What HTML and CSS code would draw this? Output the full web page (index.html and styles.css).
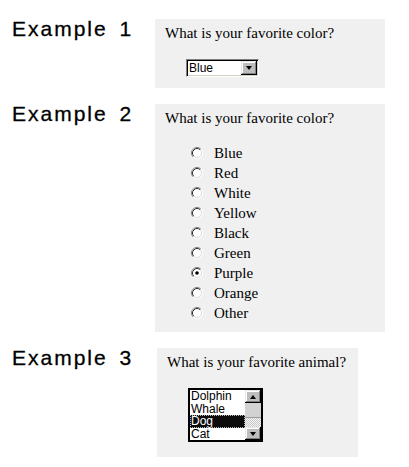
FILE: index.html
```html
<!DOCTYPE html>
<html>
<head>
<meta charset="utf-8">
<link rel="stylesheet" href="styles.css">
</head>
<body>
<div class="page">
  <div class="row">
    <div class="label">Example 1</div>
    <div class="panel panel-1">
      <div class="question">What is your favorite color?</div>
      <div class="select">
        <span class="select-value">Blue</span>
        <span class="btn btn-down"><span class="tri-down"></span></span>
      </div>
    </div>
  </div>
  <div class="row">
    <div class="label">Example 2</div>
    <div class="panel panel-2">
      <div class="question">What is your favorite color?</div>
      <ul class="radios">
        <li class="radio-row"><svg class="radio" viewBox="0 0 12 12"><circle cx="6" cy="6" r="4.5" fill="#fff"/><path d="M2.11 9.89A5.5 5.5 0 0 1 9.89 2.11" fill="none" stroke="#808080"/><path d="M9.89 2.11A5.5 5.5 0 0 1 2.11 9.89" fill="none" stroke="#fff"/><path d="M2.82 9.18A4.5 4.5 0 0 1 9.18 2.82" fill="none" stroke="#303030"/><path d="M9.18 2.82A4.5 4.5 0 0 1 2.82 9.18" fill="none" stroke="#dcdcdc"/></svg><span>Blue</span></li>
        <li class="radio-row"><svg class="radio" viewBox="0 0 12 12"><circle cx="6" cy="6" r="4.5" fill="#fff"/><path d="M2.11 9.89A5.5 5.5 0 0 1 9.89 2.11" fill="none" stroke="#808080"/><path d="M9.89 2.11A5.5 5.5 0 0 1 2.11 9.89" fill="none" stroke="#fff"/><path d="M2.82 9.18A4.5 4.5 0 0 1 9.18 2.82" fill="none" stroke="#303030"/><path d="M9.18 2.82A4.5 4.5 0 0 1 2.82 9.18" fill="none" stroke="#dcdcdc"/></svg><span>Red</span></li>
        <li class="radio-row"><svg class="radio" viewBox="0 0 12 12"><circle cx="6" cy="6" r="4.5" fill="#fff"/><path d="M2.11 9.89A5.5 5.5 0 0 1 9.89 2.11" fill="none" stroke="#808080"/><path d="M9.89 2.11A5.5 5.5 0 0 1 2.11 9.89" fill="none" stroke="#fff"/><path d="M2.82 9.18A4.5 4.5 0 0 1 9.18 2.82" fill="none" stroke="#303030"/><path d="M9.18 2.82A4.5 4.5 0 0 1 2.82 9.18" fill="none" stroke="#dcdcdc"/></svg><span>White</span></li>
        <li class="radio-row"><svg class="radio" viewBox="0 0 12 12"><circle cx="6" cy="6" r="4.5" fill="#fff"/><path d="M2.11 9.89A5.5 5.5 0 0 1 9.89 2.11" fill="none" stroke="#808080"/><path d="M9.89 2.11A5.5 5.5 0 0 1 2.11 9.89" fill="none" stroke="#fff"/><path d="M2.82 9.18A4.5 4.5 0 0 1 9.18 2.82" fill="none" stroke="#303030"/><path d="M9.18 2.82A4.5 4.5 0 0 1 2.82 9.18" fill="none" stroke="#dcdcdc"/></svg><span>Yellow</span></li>
        <li class="radio-row"><svg class="radio" viewBox="0 0 12 12"><circle cx="6" cy="6" r="4.5" fill="#fff"/><path d="M2.11 9.89A5.5 5.5 0 0 1 9.89 2.11" fill="none" stroke="#808080"/><path d="M9.89 2.11A5.5 5.5 0 0 1 2.11 9.89" fill="none" stroke="#fff"/><path d="M2.82 9.18A4.5 4.5 0 0 1 9.18 2.82" fill="none" stroke="#303030"/><path d="M9.18 2.82A4.5 4.5 0 0 1 2.82 9.18" fill="none" stroke="#dcdcdc"/></svg><span>Black</span></li>
        <li class="radio-row"><svg class="radio" viewBox="0 0 12 12"><circle cx="6" cy="6" r="4.5" fill="#fff"/><path d="M2.11 9.89A5.5 5.5 0 0 1 9.89 2.11" fill="none" stroke="#808080"/><path d="M9.89 2.11A5.5 5.5 0 0 1 2.11 9.89" fill="none" stroke="#fff"/><path d="M2.82 9.18A4.5 4.5 0 0 1 9.18 2.82" fill="none" stroke="#303030"/><path d="M9.18 2.82A4.5 4.5 0 0 1 2.82 9.18" fill="none" stroke="#dcdcdc"/></svg><span>Green</span></li>
        <li class="radio-row"><svg class="radio" viewBox="0 0 12 12"><circle cx="6" cy="6" r="4.5" fill="#fff"/><path d="M2.11 9.89A5.5 5.5 0 0 1 9.89 2.11" fill="none" stroke="#808080"/><path d="M9.89 2.11A5.5 5.5 0 0 1 2.11 9.89" fill="none" stroke="#fff"/><path d="M2.82 9.18A4.5 4.5 0 0 1 9.18 2.82" fill="none" stroke="#303030"/><path d="M9.18 2.82A4.5 4.5 0 0 1 2.82 9.18" fill="none" stroke="#dcdcdc"/><circle cx="6" cy="6" r="1.8" fill="#000"/></svg><span>Purple</span></li>
        <li class="radio-row"><svg class="radio" viewBox="0 0 12 12"><circle cx="6" cy="6" r="4.5" fill="#fff"/><path d="M2.11 9.89A5.5 5.5 0 0 1 9.89 2.11" fill="none" stroke="#808080"/><path d="M9.89 2.11A5.5 5.5 0 0 1 2.11 9.89" fill="none" stroke="#fff"/><path d="M2.82 9.18A4.5 4.5 0 0 1 9.18 2.82" fill="none" stroke="#303030"/><path d="M9.18 2.82A4.5 4.5 0 0 1 2.82 9.18" fill="none" stroke="#dcdcdc"/></svg><span>Orange</span></li>
        <li class="radio-row"><svg class="radio" viewBox="0 0 12 12"><circle cx="6" cy="6" r="4.5" fill="#fff"/><path d="M2.11 9.89A5.5 5.5 0 0 1 9.89 2.11" fill="none" stroke="#808080"/><path d="M9.89 2.11A5.5 5.5 0 0 1 2.11 9.89" fill="none" stroke="#fff"/><path d="M2.82 9.18A4.5 4.5 0 0 1 9.18 2.82" fill="none" stroke="#303030"/><path d="M9.18 2.82A4.5 4.5 0 0 1 2.82 9.18" fill="none" stroke="#dcdcdc"/></svg><span>Other</span></li>
      </ul>
    </div>
  </div>
  <div class="row">
    <div class="label">Example 3</div>
    <div class="panel panel-3">
      <div class="question">What is your favorite animal?</div>
      <div class="listbox">
        <ul class="items">
          <li class="item">Dolphin</li>
          <li class="item">Whale</li>
          <li class="item item-selected">Dog</li>
          <li class="item">Cat</li>
        </ul>
        <div class="scrollbar">
          <span class="btn btn-sb"><span class="tri-up"></span></span>
          <span class="thumb"></span>
          <span class="track"></span>
          <span class="btn btn-sb"><span class="tri-down"></span></span>
        </div>
      </div>
    </div>
  </div>
</div>
</body>
</html>
```
FILE: styles.css
```css
* { box-sizing: border-box; }
html, body { margin: 0; padding: 0; background: #fff; }
.page {
  padding: 19px 0 0 12px;
  display: flex;
  flex-direction: column;
  gap: 16px;
}
.row { display: flex; align-items: flex-start; }
.label {
  width: 143px;
  font-family: "Liberation Sans", Arial, sans-serif;
  font-size: 21px;
  line-height: 20px;
  letter-spacing: 2px;
  word-spacing: 4px;
  color: #000;
  white-space: nowrap;
  -webkit-text-stroke: 0.3px #000;
}
.panel {
  background: #f0f0f0;
  padding: 6px 10px 0 10px;
}
.panel-1 { width: 230px; height: 69px; padding-left: 10px; }
.panel-2 { width: 230px; height: 228px; }
.panel-3 { width: 201px; height: 109px; margin-left: 2px; padding-left: 10px; }
.question {
  font-family: "Liberation Serif", "Times New Roman", serif;
  font-size: 15px;
  line-height: 17px;
  color: #000;
  white-space: nowrap;
}
.select {
  margin: 17px 0 0 21px;
  width: 73px;
  height: 18px;
  background: #fff;
  border-style: solid;
  border-width: 1px;
  border-color: #808080 #fff #fff #808080;
  box-shadow: inset 1px 1px 0 #000, inset -1px -1px 0 #d4d0c8;
  display: flex;
  align-items: center;
  justify-content: space-between;
  padding: 1px 1px 1px 2px;
}
.select-value {
  font-family: "Liberation Sans", Arial, sans-serif;
  font-size: 12px;
  line-height: 14px;
  color: #000;
}
.btn {
  display: flex;
  align-items: center;
  justify-content: center;
  background: #bdbdbd;
  box-shadow: inset -1px -1px 0 #000, inset 1px 1px 0 #e8e8e8, inset -2px -2px 0 #808080, inset 2px 2px 0 #fff;
}
.btn-down { width: 16px; height: 14px; }
.tri-down {
  width: 0; height: 0;
  border-left: 3.5px solid transparent;
  border-right: 3.5px solid transparent;
  border-top: 4px solid #000;
}
.tri-up {
  width: 0; height: 0;
  border-left: 3.5px solid transparent;
  border-right: 3.5px solid transparent;
  border-bottom: 4px solid #000;
}
.radios {
  list-style: none;
  margin: 16px 0 0 0;
  padding: 0 0 0 26px;
}
.radio-row {
  height: 20px;
  display: flex;
  align-items: center;
  font-family: "Liberation Serif", "Times New Roman", serif;
  font-size: 15px;
  line-height: 20px;
  color: #000;
}
.radio { width: 12px; height: 12px; margin-right: 11px; flex: none; }
.listbox {
  margin: 17px 0 0 21px;
  width: 75px;
  height: 54px;
  border: 2px solid #000;
  background: #fff;
  display: flex;
}
.items {
  list-style: none;
  margin: 0;
  padding: 0;
  flex: 1;
}
.item {
  height: 12.5px;
  font-family: "Liberation Sans", Arial, sans-serif;
  font-size: 12px;
  line-height: 12.5px;
  padding-left: 1px;
  color: #000;
  white-space: nowrap;
}
.item-selected {
  background: #0c0c0c;
  color: #fff;
  outline: 1px dotted #bbb;
  outline-offset: -1px;
}
.scrollbar {
  width: 16px;
  display: flex;
  flex-direction: column;
}
.btn-sb { width: 16px; height: 13px; flex: none; }
.thumb {
  height: 14px;
  flex: none;
  background: #d2d2d2;
}
.track {
  flex: 1;
  background: repeating-conic-gradient(#c8c8c8 0 25%, #f4f4f4 0 50%) 0 0 / 2px 2px;
  border-top: 1px solid #9a9a9a;
}
```
